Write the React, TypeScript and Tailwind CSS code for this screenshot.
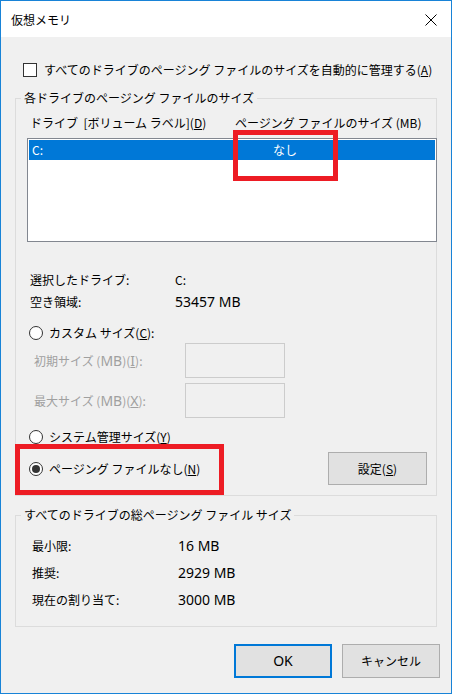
import React from "react";

function Radio({ checked }: { checked?: boolean }) {
  return (
    <span className="w-[14px] h-[14px] rounded-full border border-[#333333] bg-white flex items-center justify-center shrink-0">
      {checked ? <span className="w-[8px] h-[8px] rounded-full bg-[#333333]" /> : null}
    </span>
  );
}

function L({ children }: { children: React.ReactNode }) {
  return <span className="text-[14px] leading-[16px] font-['Noto_Sans',sans-serif]">{children}</span>;
}

export default function App() {
  return (
    <div className="relative w-[452px] h-[694px] border border-[#1883d7] bg-[#f0f0f0] flex flex-col text-[12px] leading-[16px] text-black font-['Noto_Sans_CJK_JP','Noto_Sans',sans-serif]">
      {/* Title bar */}
      <div className="h-[36px] bg-white flex items-center justify-between pl-[10px] pr-[14px] pt-[2px] shrink-0">
        <span className="text-[12px]">仮想メモリ</span>
        <svg width="12" height="12" viewBox="0 0 12 12" className="block">
          <path d="M0.5 0.5 L11.5 11.5 M11.5 0.5 L0.5 11.5" stroke="#000" strokeWidth="1" />
        </svg>
      </div>

      {/* Body */}
      <div className="flex-1 flex flex-col px-[14px] pt-[25px]">
        <div className="flex items-center h-[16px] pl-[8px]">
          <span className="w-[14px] h-[14px] border border-[#333333] bg-white shrink-0" />
          <span className="ml-[7px] whitespace-nowrap">
            すべてのドライブのページング ファイルのサイズを自動的に管理する(<u>A</u>)
          </span>
        </div>

        {/* Group 1 */}
        <fieldset className="mt-[12px] border border-[#dcdcdc] p-0 m-0 min-w-0">
          <legend className="ml-[5px] px-[3px] leading-[16px] whitespace-nowrap">
            各ドライブのページング ファイルのサイズ
          </legend>
          <div className="pl-[11px] pt-[9px] pb-[10px] flex flex-col">
            <div className="flex h-[16px] pl-[3px] whitespace-nowrap">
              <span className="w-[205px]">
                ドライブ&nbsp;&nbsp;[ボリューム ラベル](<u>D</u>)
              </span>
              <span>ページング ファイルのサイズ (MB)</span>
            </div>
            <div className="mt-[7px] mr-[-1px] h-[104px] border border-[#828790] bg-white p-[1px]">
              <div className="h-[20px] bg-[#0078d7] text-white flex items-center">
                <span className="w-[244px] pl-[3px]">C:</span>
                <span>なし</span>
              </div>
            </div>

            <div className="mt-[30px] flex h-[16px] pl-[3px] items-center">
              <span className="w-[145px]">選択したドライブ:</span>
              <span>C:</span>
            </div>
            <div className="mt-[6px] flex h-[16px] pl-[3px] items-center">
              <span className="w-[145px]">空き領域:</span>
              <L>53457 MB</L>
            </div>

            <div className="mt-[15px] flex items-center h-[16px] pl-[2px]">
              <Radio />
              <span className="ml-[6px]">
                カスタム サイズ(<u>C</u>):
              </span>
            </div>
            <div className="mt-[2px] flex items-center h-[35px] pl-[7px] text-[#a0a0a0]">
              <span className="w-[151px] whitespace-nowrap">
                初期サイズ (<L>MB</L>)(<u><L>I</L></u>):
              </span>
              <span className="w-[100px] h-[35px] border border-[#cccccc] bg-[#f0f0f0]" />
            </div>
            <div className="mt-[5px] flex items-center h-[35px] pl-[7px] text-[#a0a0a0]">
              <span className="w-[151px] whitespace-nowrap">
                最大サイズ (<L>MB</L>)(<u><L>X</L></u>):
              </span>
              <span className="w-[100px] h-[35px] border border-[#cccccc] bg-[#f0f0f0]" />
            </div>

            <div className="mt-[11px] flex items-center h-[16px] pl-[2px]">
              <Radio />
              <span className="ml-[6px]">
                システム管理サイズ(<u>Y</u>)
              </span>
            </div>
            <div className="mt-[7px] flex items-center justify-between h-[33px] pl-[2px] pr-[9px]">
              <div className="flex items-center">
                <Radio checked />
                <span className="ml-[6px]">
                  ページング ファイルなし(<u>N</u>)
                </span>
              </div>
              <button className="w-[99px] h-[33px] border border-[#adadad] bg-[#e1e1e1] flex items-center justify-center">
                設定(<u>S</u>)
              </button>
            </div>
          </div>
        </fieldset>

        {/* Group 2 */}
        <fieldset className="mt-[11px] border border-[#dcdcdc] p-0 m-0 min-w-0">
          <legend className="ml-[5px] px-[3px] leading-[16px] whitespace-nowrap">
            すべてのドライブの総ページング ファイル サイズ
          </legend>
          <div className="pl-[16px] pt-[15px] pb-[18px] flex flex-col gap-[11px]">
            <div className="flex h-[16px] items-center">
              <span className="w-[146px]">最小限:</span>
              <L>16 MB</L>
            </div>
            <div className="flex h-[16px] items-center">
              <span className="w-[146px]">推奨:</span>
              <L>2929 MB</L>
            </div>
            <div className="flex h-[16px] items-center">
              <span className="w-[146px]">現在の割り当て:</span>
              <L>3000 MB</L>
            </div>
          </div>
        </fieldset>

        {/* Buttons */}
        <div className="mt-[17px] mr-[-3px] flex justify-end gap-[10px]">
          <button className="w-[98px] h-[34px] border-2 border-[#0078d7] bg-[#e1e1e1] flex items-center justify-center">
            <L>OK</L>
          </button>
          <button className="w-[98px] h-[34px] border border-[#adadad] bg-[#e1e1e1] flex items-center justify-center">
            キャンセル
          </button>
        </div>
      </div>

      {/* Red annotation boxes */}
      <div className="absolute left-[232px] top-[129px] w-[105px] h-[51px] border-[5px] border-[#ed1c24]" />
      <div className="absolute left-[14px] top-[443px] w-[209px] h-[51px] border-[5px] border-[#ed1c24]" />
    </div>
  );
}
